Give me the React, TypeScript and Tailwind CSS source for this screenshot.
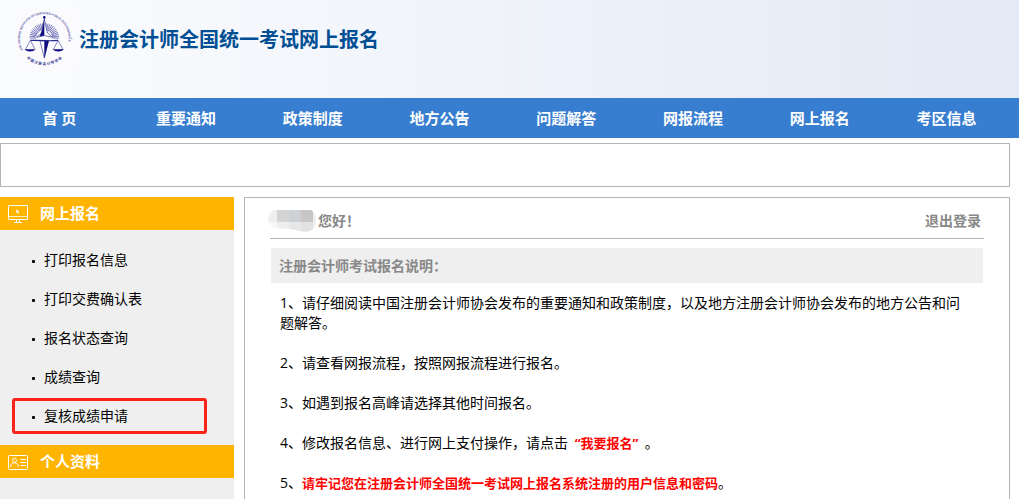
const navItems = ['首 页', '重要通知', '政策制度', '地方公告', '问题解答', '网报流程', '网上报名', '考区信息'];

const menuItems = [
  { label: '打印报名信息' },
  { label: '打印交费确认表' },
  { label: '报名状态查询' },
  { label: '成绩查询' },
  { label: '复核成绩申请', marked: true },
];

// angles of the rays behind the sword
const rays = Array.from({ length: 25 }, (_, i) => 180 + i * 7.5);

function Logo() {
  return (
    <svg className="h-[62px] w-[60px] shrink-0 overflow-visible" viewBox="0 0 60 62" fill="none" aria-hidden="true">
      <rect width="60" height="62" fill="#fbfbfd" />
      <defs>
        <path id="ringTop" d="M7.9 42A24.3 24.3 0 1 1 50.7 42" />
        <path id="ringBottom" d="M8.3 46.7A26.5 26.5 0 0 0 50.3 46.7" />
      </defs>
      <text fill="#4a4aa4" fontSize="2.9" fontWeight="700" fontFamily="Liberation Sans, sans-serif">
        <textPath href="#ringTop">THE CHINESE INSTITUTE OF CERTIFIED PUBLIC ACCOUNTANTS</textPath>
      </text>
      <text fill="#3c3c9c" fontSize="3.6" fontWeight="700" textAnchor="middle" fontFamily="Noto Sans CJK SC, sans-serif">
        <textPath href="#ringBottom" startOffset="50%">中 国 注 册 会 计 师 协 会</textPath>
      </text>
      {rays.map((a) => {
        const c = Math.cos((a * Math.PI) / 180);
        const s = Math.sin((a * Math.PI) / 180);
        return (
          <line key={a} x1={29.3 + 8 * c} y1={30 + 8 * s} x2={29.3 + 14.8 * c} y2={30 + 14.8 * s} stroke="#6767b8" strokeWidth="0.9" />
        );
      })}
      {/* star and sword */}
      <path d="M29.3 11 32.4 25 37.5 29.2 29.3 27.6 22 29.2 26.4 25Z" fill="#fff" stroke="#23238c" strokeWidth="0.6" />
      <path d="M29.3 10V27.6L24.4 28.4 27 23Z" fill="#0c0c80" />
      <circle cx="29.3" cy="9.4" r="1.3" fill="#0c0c80" />
      <path d="M25 32.8H33.6L29.3 50Z" fill="#fff" stroke="#23238c" strokeWidth="0.6" />
      <path d="M29.3 32.8H33.8L29.3 50.5Z" fill="#0c0c80" />
      {/* beam and pans */}
      <path d="M15.4 32.4Q22 32.2 29.3 32.6T43 32.4" stroke="#23238c" strokeWidth="1.1" />
      <path d="M15.4 32.4 10.4 41.3M15.4 32.4 20 41.3M43 32.4 38.4 41.3M43 32.4 48 41.3" stroke="#5454ae" strokeWidth="0.7" />
      <path d="M9.4 41.2H20.6Q18.6 43.6 15 43.6T9.4 41.2ZM37.6 41.2H49Q47 43.6 43.3 43.6T37.6 41.2Z" fill="#0c0c80" />
    </svg>
  );
}

function MonitorIcon() {
  return (
    <svg className="h-5 w-5 shrink-0" viewBox="0 0 20 20" fill="none" stroke="#fff" aria-hidden="true">
      <rect x="0.5" y="1.5" width="19" height="14" rx="0.5" />
      <path d="M1 12.5H19" strokeWidth="0.8" />
      <path d="M8.5 16V18.5M11.5 16V18.5M6 18.5H14" />
      <path d="M8 5.5 11.5 7.5 10.2 8 11 9.8 10 10 9.3 8.5 8.5 9Z" fill="#fff" stroke="none" />
    </svg>
  );
}

function CardIcon() {
  return (
    <svg className="h-5 w-5 shrink-0" viewBox="0 0 20 20" fill="none" stroke="#fff" aria-hidden="true">
      <rect x="0.5" y="3.5" width="19" height="14" rx="1" />
      <circle cx="6.5" cy="8.3" r="2" />
      <path d="M2.5 15C2.7 12.4 4 10.8 6.5 10.8S10.2 12.4 10.5 15" />
      <path d="M12.5 7.5H18M12.5 10.5H18M12.5 13.5H18" />
    </svg>
  );
}

// user name is hidden by a mosaic
function MaskedName() {
  return (
    <svg className="h-[22px] w-12 shrink-0" viewBox="0 0 48 22" role="img" aria-label="用户">
      <clipPath id="mask">
        <path d="M7 0H43Q48 3 48 10 48 18 42 21 38 22 32 21L22 19 8 18Q0 16 0 8 1 2 7 0Z" />
      </clipPath>
      <g clipPath="url(#mask)">
        <rect width="48" height="22" fill="#efefef" />
        <rect x="9" width="12" height="12" fill="#d5d4d4" />
        <rect x="21" width="12" height="12" fill="#cdd0d4" />
        <rect x="33" width="12" height="12" fill="#c9c7c6" />
        <rect y="12" width="9" height="10" fill="#f8f8f8" />
        <rect x="9" y="12" width="12" height="10" fill="#eeeeee" />
        <rect x="21" y="12" width="12" height="10" fill="#e5e7e8" />
        <rect x="33" y="12" width="12" height="10" fill="#e2e2e2" />
      </g>
    </svg>
  );
}

function SideTitle({ icon, text }: { icon: React.ReactNode; text: string }) {
  return (
    <h2 className="flex h-[33px] items-center gap-3 bg-[#ffb400] px-2 text-[15px] font-bold text-white">
      {icon}
      {text}
    </h2>
  );
}

export default function App() {
  return (
    <div className="flex min-h-screen flex-col bg-white font-['Open_Sans','Noto_Sans_CJK_SC',sans-serif] text-sm text-black">
      <header className="flex h-[98px] items-start gap-1 bg-linear-to-r from-[#fbfcfe] to-[#e3e9f5] pt-2 pl-[15px]">
        <Logo />
        <h1 className="flex h-16 items-center text-xl font-bold text-[#004f94]">注册会计师全国统一考试网上报名</h1>
      </header>
      <nav className="flex h-10 items-center bg-[#377dd0] pt-px pr-[5px] text-[15px] font-bold text-white">
        {navItems.map((item) => (
          <a key={item} href="#" className="flex-1 pr-2 text-center">
            {item}
          </a>
        ))}
      </nav>
      <div className="mt-[5px] mr-[9px] h-11 border border-[#b5b5b5]" />
      <div className="mt-2.5 mr-[9px] flex flex-1 gap-2.5">
        <aside className="w-[234px] shrink-0 bg-[#efefef]">
          <SideTitle icon={<MonitorIcon />} text="网上报名" />
          <ul className="py-2.5">
            {menuItems.map((item) => (
              <li key={item.label} className="relative flex h-[39px] items-center gap-[9px] pl-8">
                <span className="mt-1 h-[3px] w-[3px] rounded-[1px] bg-black" />
                <a href="#">{item.label}</a>
                {item.marked && (
                  <span className="pointer-events-none absolute top-0.5 right-[27px] bottom-px left-3 rounded-[3px] border-3 border-[#fb2317]" />
                )}
              </li>
            ))}
          </ul>
          <SideTitle icon={<CardIcon />} text="个人资料" />
        </aside>
        <main className="min-w-0 flex-1 border border-b-0 border-[#b5b5b5] px-[25px]">
          <div className="flex h-[41px] items-end justify-between border-b border-[#b5b5b5] pr-[3px] font-bold text-[#888]">
            <div className="-ml-0.5 flex h-[34px] items-center gap-0.5">
              <MaskedName />
              <span>您好！</span>
            </div>
            <a href="#" className="flex h-[34px] items-center">退出登录</a>
          </div>
          <h3 className="mx-px mt-[9px] flex h-[35px] items-center bg-[#efefef] px-2 font-bold text-[#888]">
            注册会计师考试报名说明：
          </h3>
          <div className="flex flex-col gap-5 pt-2.5 pr-3.5 pl-2.5 leading-5">
            <p>1、请仔细阅读中国注册会计师协会发布的重要通知和政策制度，以及地方注册会计师协会发布的地方公告和问题解答。</p>
            <p>2、请查看网报流程，按照网报流程进行报名。</p>
            <p>3、如遇到报名高峰请选择其他时间报名。</p>
            <p>
              4、修改报名信息、进行网上支付操作，请点击 <a href="#" className="px-[3px] text-[13px] font-bold text-[#f00]">“我要报名”</a> 。
            </p>
            <p>
              5、<strong className="text-[13px] font-bold text-[#f00]">请牢记您在注册会计师全国统一考试网上报名系统注册的用户信息和密码</strong>。
            </p>
          </div>
        </main>
      </div>
    </div>
  );
}
